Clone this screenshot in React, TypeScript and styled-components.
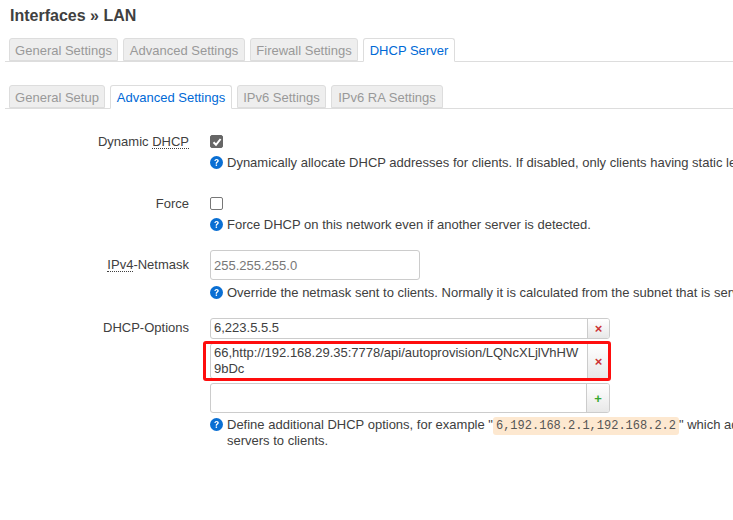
import React from "react";
import styled, { createGlobalStyle } from "styled-components";

const Global = createGlobalStyle`
  html, body {
    margin: 0;
    padding: 0;
    background: #fff;
    overflow: hidden;
  }
  body {
    width: 733px;
    height: 520px;
    font-family: "Liberation Sans", Arial, sans-serif;
    font-size: 13px;
    color: #404040;
  }
`;

const Page = styled.div`
  width: 733px;
  height: 520px;
  overflow: hidden;
  padding: 5px 0 0 5px;
  box-sizing: border-box;
`;

const Title = styled.h2`
  margin: 0 0 0 5px;
  height: 21px;
  font-size: 16px;
  line-height: 21px;
  font-weight: 700;
  color: #404040;
`;

const TabBar = styled.ul<{ $top: number }>`
  display: flex;
  gap: 5px;
  list-style: none;
  margin: ${(p) => p.$top}px 0 0;
  padding: 0 0 0 4px;
  height: 23px;
  border-bottom: 1px solid #ddd;
`;

const Tab = styled.li<{ $active?: boolean; $w: number }>`
  box-sizing: border-box;
  height: ${(p) => (p.$active ? 24 : 23)}px;
  width: ${(p) => p.$w}px;
  padding-top: 4px;
  text-align: center;
  font-size: 13px;
  line-height: 16px;
  white-space: nowrap;
  border: 1px solid #ddd;
  border-radius: 3px 3px 0 0;
  background: ${(p) => (p.$active ? "#fff" : "#eee")};
  border-bottom-color: ${(p) => (p.$active ? "#fff" : "#ddd")};
  color: ${(p) => (p.$active ? "#0069d6" : "#999")};
`;

const Form = styled.div`
  padding-top: 26px;
`;

const Row = styled.div<{ $h: number }>`
  display: grid;
  grid-template-columns: 184px 1fr;
  column-gap: 21px;
  height: ${(p) => p.$h}px;
`;

const Label = styled.div<{ $top: number }>`
  padding-top: ${(p) => p.$top}px;
  text-align: right;
  font-size: 13px;
  line-height: 14px;
`;

const Abbr = styled.span`
  border-bottom: 1px dotted #404040;
  line-height: 13px;
  display: inline-block;
`;

const Field = styled.div`
  min-width: 0;
`;

const Check = styled.span<{ $on?: boolean }>`
  display: flex;
  align-items: center;
  justify-content: center;
  box-sizing: border-box;
  width: 13px;
  height: 13px;
  border-radius: 2px;
  margin-bottom: 7px;
  background: ${(p) => (p.$on ? "#666" : "#fff")};
  border: 1px solid ${(p) => (p.$on ? "#666" : "#777")};
`;

const Text = styled.div`
  box-sizing: border-box;
  width: 210px;
  height: 30px;
  padding: 0 3px;
  font-size: 13px;
  line-height: 30px;
  color: #777;
  border: 1px solid #ccc;
  border-radius: 3px;
`;

const Help = styled.div<{ $top?: number }>`
  display: flex;
  gap: 4px;
  margin-top: ${(p) => p.$top ?? 0}px;
  width: 530px;
  font-size: 13px;
  line-height: 16px;
  white-space: nowrap;
  color: #404040;
`;

const HelpIcon = styled.svg`
  flex: none;
  width: 13px;
  height: 13px;
  margin-top: 1px;
`;

const HelpBody = styled.div`
  min-width: 0;
`;

const Code = styled.code`
  font-family: "Liberation Mono", monospace;
  font-size: 12px;
  line-height: 1;
  color: #555;
  background: #fde8d0;
  border-radius: 3px;
  padding: 2px 3px;
`;

const OptionList = styled.div`
  display: grid;
  row-gap: 4px;
  width: 400px;
`;

const OptionRow = styled.div<{ $h: number }>`
  position: relative;
  display: flex;
  box-sizing: border-box;
  height: ${(p) => p.$h}px;
  border: 1px solid #ccc;
  border-radius: 3px;
`;

const OptionValue = styled.div`
  flex: 1;
  min-width: 0;
  padding: 1px 3px;
  font-size: 13px;
  line-height: 16px;
  color: #404040;
  word-break: break-all;
`;

const OptionButton = styled.div<{ $add?: boolean }>`
  flex: none;
  display: flex;
  align-items: center;
  justify-content: center;
  box-sizing: border-box;
  width: ${(p) => (p.$add ? 23 : 22)}px;
  border-left: 1px solid #ccc;
  border-radius: 0 2px 2px 0;
  background: linear-gradient(#fff, #e8e8e8);
  font-size: 13px;
  font-weight: 700;
  color: ${(p) => (p.$add ? "#36a82e" : "#c33")};
`;

const Highlight = styled.div`
  position: absolute;
  left: -8px;
  top: -3px;
  width: 408px;
  height: 40px;
  box-sizing: border-box;
  border: 3px solid #fe0d0d;
  border-radius: 3px;
`;

const Info = () => (
  <HelpIcon viewBox="0 0 16 16">
    <circle cx="8" cy="8" r="8" fill="#0a6fd3" />
    <path
      d="M5.4 6.2C5.5 4.6 6.6 3.6 8.2 3.6c1.5 0 2.6.9 2.6 2.2 0 1-.5 1.5-1.3 2.1-.7.5-.9.8-.9 1.5H7c0-1.1.3-1.6 1.1-2.2.6-.5.9-.8.9-1.3 0-.6-.4-.9-1-.9-.6 0-1 .4-1.1 1.2H5.4z"
      fill="#fff"
    />
    <rect x="7" y="10.4" width="1.7" height="1.8" fill="#fff" />
  </HelpIcon>
);

const topTabs = [
  { name: "General Settings", w: 109 },
  { name: "Advanced Settings", w: 122 },
  { name: "Firewall Settings", w: 108 },
  { name: "DHCP Server", w: 92, active: true },
];

const subTabs = [
  { name: "General Setup", w: 96 },
  { name: "Advanced Settings", w: 122, active: true },
  { name: "IPv6 Settings", w: 89 },
  { name: "IPv6 RA Settings", w: 112 },
];

export default function App() {
  return (
    <Page>
      <Global />
      <Title>Interfaces » LAN</Title>
      <TabBar $top={12}>
        {topTabs.map((t) => (
          <Tab key={t.name} $w={t.w} $active={t.active}>
            {t.name}
          </Tab>
        ))}
      </TabBar>
      <TabBar $top={23}>
        {subTabs.map((t) => (
          <Tab key={t.name} $w={t.w} $active={t.active}>
            {t.name}
          </Tab>
        ))}
      </TabBar>

      <Form>
        <Row $h={62}>
          <Label $top={0}>
            Dynamic <Abbr>DHCP</Abbr>
          </Label>
          <Field>
            <Check $on>
              <svg width="10" height="10" viewBox="0 0 10 10">
                <path d="M1.5 5.2 4 7.8 8.6 2" fill="none" stroke="#fff" strokeWidth="2" />
              </svg>
            </Check>
            <Help>
              <Info />
              <HelpBody>Dynamically allocate DHCP addresses for clients. If disabled, only clients having static leases will be served.</HelpBody>
            </Help>
          </Field>
        </Row>
        <Row $h={53}>
          <Label $top={0}>Force</Label>
          <Field>
            <Check />
            <Help>
              <Info />
              <HelpBody>Force DHCP on this network even if another server is detected.</HelpBody>
            </Help>
          </Field>
        </Row>
        <Row $h={68}>
          <Label $top={8}>
            <Abbr>IPv4</Abbr>-Netmask
          </Label>
          <Field>
            <Text>255.255.255.0</Text>
            <Help $top={5}>
              <Info />
              <HelpBody>Override the netmask sent to clients. Normally it is calculated from the subnet that is served.</HelpBody>
            </Help>
          </Field>
        </Row>
        <Row $h={130}>
          <Label $top={3}>DHCP-Options</Label>
          <Field>
            <OptionList>
              <OptionRow $h={21}>
                <OptionValue>6,223.5.5.5</OptionValue>
                <OptionButton>×</OptionButton>
              </OptionRow>
              <OptionRow $h={36}>
                <OptionValue>66,http://192.168.29.35:7778/api/autoprovision/LQNcXLjlVhHW9bDc</OptionValue>
                <OptionButton>×</OptionButton>
                <Highlight />
              </OptionRow>
              <OptionRow $h={30}>
                <OptionValue />
                <OptionButton $add>+</OptionButton>
              </OptionRow>
            </OptionList>
            <Help $top={4}>
              <Info />
              <HelpBody>
                Define additional DHCP options, for example "<Code>6,192.168.2.1,192.168.2.2</Code>" which advertises different DNS
                <br />
                servers to clients.
              </HelpBody>
            </Help>
          </Field>
        </Row>
      </Form>
    </Page>
  );
}
